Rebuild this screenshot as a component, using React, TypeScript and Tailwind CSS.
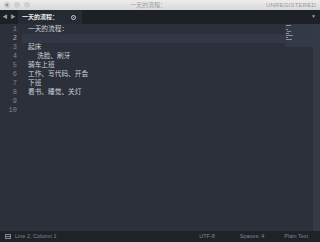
import React from 'react';

const lines: { text: string; indent?: boolean }[] = [
  { text: '一天的流程：' },
  { text: '' },
  { text: '起床' },
  { text: '洗脸、刷牙', indent: true },
  { text: '骑车上班' },
  { text: '工作、写代码、开会' },
  { text: '下班' },
  { text: '看书、睡觉、关灯' },
  { text: '' },
  { text: '' },
];

const mono = { fontFamily: '"Liberation Mono", "Noto Sans CJK SC", monospace' };
const sans = { fontFamily: '"Liberation Sans", "Noto Sans CJK SC", sans-serif' };

function TitleBar() {
  return (
    <div className="relative flex h-[10px] items-center bg-gradient-to-b from-[#ededed] to-[#d9d9d9] px-[4px]" style={sans}>
      <div className="flex items-center gap-[4px]">
        <span className="flex h-[6px] w-[6px] items-center justify-center rounded-full bg-[#c9c9c9]">
          <span className="h-[2px] w-[2px] rounded-full bg-[#7a7a7a]" />
        </span>
        <span className="h-[6px] w-[6px] rounded-full bg-[#d0d0d0]" />
        <span className="h-[6px] w-[6px] rounded-full bg-[#d0d0d0]" />
      </div>
      <div className="flex-1 text-center text-[6px] leading-none text-[#a0a0a0]">一天的流程：</div>
      <div className="text-[6px] leading-none tracking-[0.2px] text-[#9a9a9a]">UNREGISTERED</div>
    </div>
  );
}

function TabBar() {
  return (
    <div className="flex h-[14px] items-stretch bg-[#1d2026]" style={sans}>
      <div className="flex w-[18px] items-center justify-center gap-[3px] text-[5px] text-[#9aa0a8]">
        <span>◀</span>
        <span>▶</span>
      </div>
      <div className="flex w-[64px] items-center justify-between bg-[#262a32] pl-[4px] pr-[6px]">
        <span className="text-[6px] font-bold leading-none text-[#eceef1]">一天的流程：</span>
        <span className="flex h-[5px] w-[5px] items-center justify-center rounded-full border border-[#c8ccd2]">
          <span className="h-[1px] w-[1px] rounded-full bg-[#c8ccd2]" />
        </span>
      </div>
      <div className="flex flex-1 items-center justify-end pr-[4px] text-[5px] text-[#9aa0a8]">▼</div>
    </div>
  );
}

function Minimap() {
  return (
    <div className="flex w-[28px] flex-col">
      <div className="h-[23px] bg-[#343a45] pl-[1px] pt-[1px]">
        <div className="flex flex-col gap-[1px]">
          <div className="h-[1px] w-[5px] bg-[#8a919c]" />
          <div className="h-[1px] w-0" />
          <div className="h-[1px] w-[2px] bg-[#8a919c]" />
          <div className="ml-[1px] h-[1px] w-[4px] bg-[#8a919c]" />
          <div className="h-[1px] w-[3px] bg-[#8a919c]" />
          <div className="h-[1px] w-[7px] bg-[#8a919c]" />
          <div className="h-[1px] w-[2px] bg-[#8a919c]" />
          <div className="h-[1px] w-[6px] bg-[#8a919c]" />
        </div>
      </div>
    </div>
  );
}

function Editor() {
  return (
    <div className="flex flex-1 bg-[#2b303b]">
      <div className="w-[22px] pt-[1px] pr-[5px] text-right text-[7px] leading-[9px] text-[#7d8693]" style={mono}>
        {lines.map((_, i) => (
          <div key={i} className={i === 1 ? 'text-[#a7adb6]' : ''}>{i + 1}</div>
        ))}
      </div>
      <div className="flex-1 pt-[1px] text-[6.7px] leading-[9px] text-[#cdd1d8]" style={mono}>
        {lines.map((l, i) => (
          <div key={i} className={`h-[9px] pl-[6px] ${i === 1 ? 'bg-[#323845]' : ''}`}>
            <span className={l.indent ? 'pl-[9px]' : ''}>{l.text}</span>
          </div>
        ))}
      </div>
      <Minimap />
      <div className="w-[7px] bg-[#353b46]" />
    </div>
  );
}

function StatusBar() {
  return (
    <div className="flex h-[11px] items-center bg-[#1f2228] pl-[5px] text-[5.5px] leading-none text-[#7f8690]" style={sans}>
      <span className="flex h-[5px] w-[6px] flex-col border border-[#7f8690]">
        <span className="mt-[1px] h-[1px] w-full bg-[#7f8690]" />
      </span>
      <span className="ml-[4px]">Line 2, Column 1</span>
      <span className="ml-auto">UTF-8</span>
      <span className="ml-[25px]">Spaces: 4</span>
      <span className="ml-[20px] mr-[12px]">Plain Text</span>
    </div>
  );
}

export default function App() {
  return (
    <div className="flex h-[242px] w-[320px] flex-col overflow-hidden bg-[#2b303b]">
      <TitleBar />
      <TabBar />
      <Editor />
      <StatusBar />
    </div>
  );
}
